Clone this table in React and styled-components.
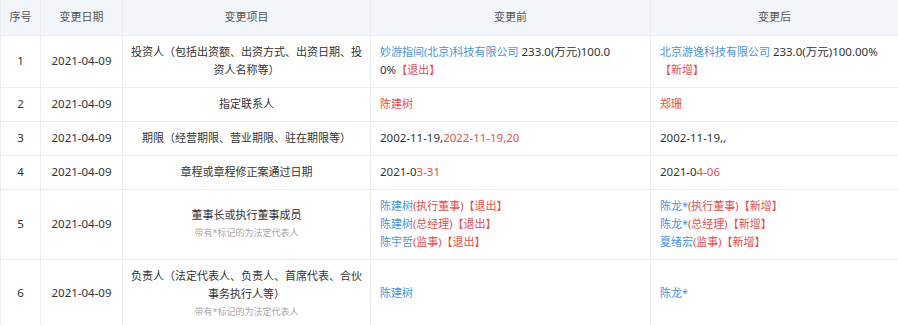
import React from "react";
import styled, { createGlobalStyle } from "styled-components";

const Global = createGlobalStyle`
  html, body { margin: 0; padding: 0; background: #fff; }
  body { font-family: "Noto Sans", "Noto Sans CJK SC", sans-serif; }
`;

const Table = styled.table`
  width: 898px;
  border-collapse: collapse;
  table-layout: fixed;
  font-size: 11px;
  color: #333;
`;

const Th = styled.th`
  background: #f2f6fa;
  color: #555;
  font-weight: normal;
  height: 35px;
  padding: 0 8px;
  line-height: 18px;
  text-align: center;
  border: 1px solid #e9edf1;
  border-top: none;
  box-sizing: border-box;
`;

const Td = styled.td`
  padding: 7px 8px 8px;
  line-height: 18px;
  text-align: ${(p) => (p.$left ? "left" : "center")};
  vertical-align: middle;
  border: 1px solid #e9edf1;
  padding-left: ${(p) => (p.$left ? "9px" : "8px")};
`;

const Num = styled.span`
  font-size: 11.5px;
`;

const Link = styled.span`
  color: #4d93dc;
`;

const Red = styled.span`
  color: #e2504f;
`;

const Note = styled.div`
  color: #a8a8a8;
  font-size: 9px;
  line-height: 17px;
`;

const Line = styled.div``;

const cols = [40, 82, 248, 280, 248];

const rows = [1, 2, 3, 4, 5, 6];

function Lead({ n }) {
  return (
    <>
      <Td>
        <Num>{n}</Num>
      </Td>
      <Td>
        <Num>2021-04-09</Num>
      </Td>
    </>
  );
}

export default function App() {
  return (
    <>
      <Global />
      <Table>
        <colgroup>
          {cols.map((w, i) => (
            <col key={i} style={{ width: w }} />
          ))}
        </colgroup>
        <thead>
          <tr>
            <Th>序号</Th>
            <Th>变更日期</Th>
            <Th>变更项目</Th>
            <Th>变更前</Th>
            <Th>变更后</Th>
          </tr>
        </thead>
        <tbody>
          <tr>
            <Lead n={rows[0]} />
            <Td>投资人（包括出资额、出资方式、出资日期、投资人名称等）</Td>
            <Td $left>
              <Link>妙游指间(北京)科技有限公司</Link> <Num>233.0(万元)100.0</Num>
              <br />
              <Num>0%</Num>
              <Red>【退出】</Red>
            </Td>
            <Td $left>
              <Link>北京游逸科技有限公司</Link> <Num>233.0(万元)100.00%</Num>
              <br />
              <Red>【新增】</Red>
            </Td>
          </tr>
          <tr>
            <Lead n={rows[1]} />
            <Td>指定联系人</Td>
            <Td $left>
              <Red>陈建树</Red>
            </Td>
            <Td $left>
              <Red>郑珊</Red>
            </Td>
          </tr>
          <tr>
            <Lead n={rows[2]} />
            <Td>期限（经营期限、营业期限、驻在期限等）</Td>
            <Td $left>
              <Num>
                2002-11-19,<Red>2022-11-19,20</Red>
              </Num>
            </Td>
            <Td $left>
              <Num>2002-11-19,,</Num>
            </Td>
          </tr>
          <tr>
            <Lead n={rows[3]} />
            <Td>章程或章程修正案通过日期</Td>
            <Td $left>
              <Num>
                2021-0<Red>3-31</Red>
              </Num>
            </Td>
            <Td $left>
              <Num>
                2021-0<Red>4-06</Red>
              </Num>
            </Td>
          </tr>
          <tr>
            <Lead n={rows[4]} />
            <Td>
              <Line>董事长或执行董事成员</Line>
              <Note>带有*标记的为法定代表人</Note>
            </Td>
            <Td $left>
              <Line>
                <Link>陈建树</Link>
                <Red>(执行董事)【退出】</Red>
              </Line>
              <Line>
                <Link>陈建树</Link>
                <Red>(总经理)【退出】</Red>
              </Line>
              <Line>
                <Link>陈宇哲</Link>
                <Red>(监事)【退出】</Red>
              </Line>
            </Td>
            <Td $left>
              <Line>
                <Link>陈龙*</Link>
                <Red>(执行董事)【新增】</Red>
              </Line>
              <Line>
                <Link>陈龙*</Link>
                <Red>(总经理)【新增】</Red>
              </Line>
              <Line>
                <Link>夏绪宏</Link>
                <Red>(监事)【新增】</Red>
              </Line>
            </Td>
          </tr>
          <tr>
            <Lead n={rows[5]} />
            <Td>
              <Line>负责人（法定代表人、负责人、首席代表、合伙事务执行人等）</Line>
              <Note>带有*标记的为法定代表人</Note>
            </Td>
            <Td $left>
              <Link>陈建树</Link>
            </Td>
            <Td $left>
              <Link>陈龙*</Link>
            </Td>
          </tr>
        </tbody>
      </Table>
    </>
  );
}
